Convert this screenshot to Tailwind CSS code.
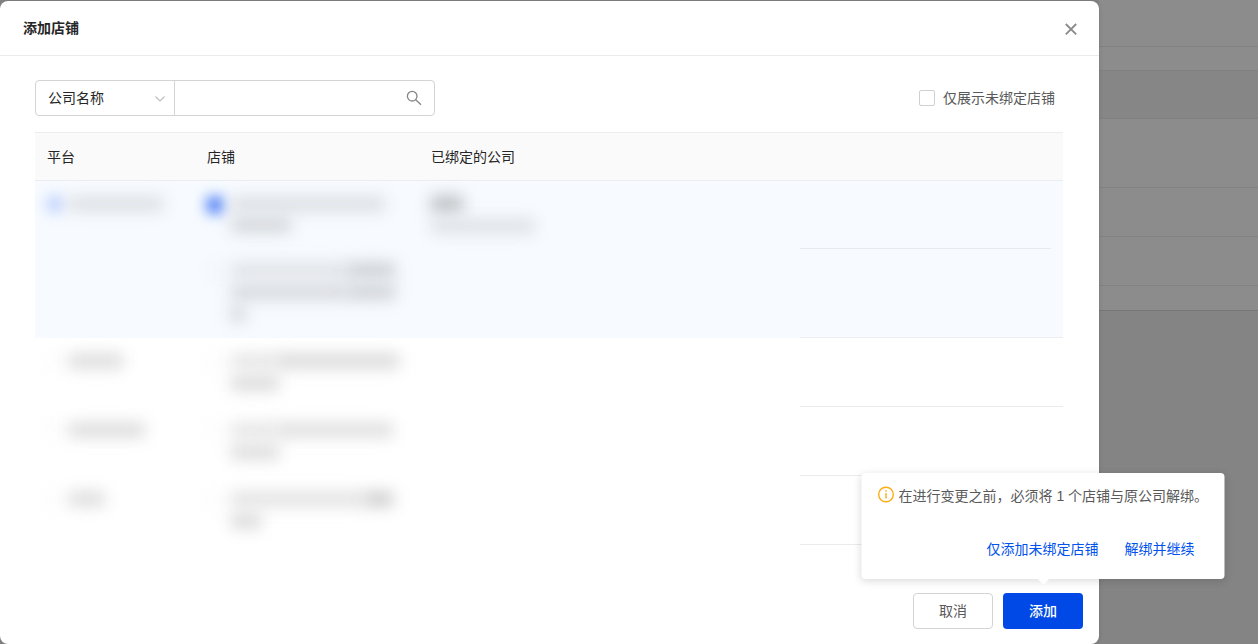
<!DOCTYPE html>
<html lang="zh-CN">
<head>
<meta charset="utf-8">
<meta name="viewport" content="width=device-width, initial-scale=1">
<title>添加店铺</title>
<script src="https://cdn.jsdelivr.net/npm/@tailwindcss/browser@4"></script>
</head>
<body class="flex min-h-screen overflow-x-hidden bg-[#848484] font-['Liberation_Sans','Noto_Sans_CJK_SC',sans-serif] text-sm text-[#262626]">

<main role="dialog" aria-labelledby="title" class="z-10 mt-px flex min-w-0 flex-1 flex-col rounded-lg bg-white shadow-[0_0_4px_rgba(0,0,0,0.15)]">
  <header class="flex h-[55px] items-center justify-between border-b border-[#ebebeb] pr-5 pl-[23px]">
    <h1 id="title" class="text-sm font-bold">添加店铺</h1>
    <button type="button" aria-label="关闭" class="flex size-4 items-center justify-center text-[#8a8a8a]">
      <svg class="size-4" viewBox="0 0 16 16" fill="none" stroke="currentColor" stroke-width="1.8"><path d="M2.8 4l10.400 10.400M13.200 4l-10.400 10.400"/></svg>
    </button>
  </header>

  <div class="flex flex-1 flex-col gap-4 pt-6 pr-9 pl-[35px]">
    <div class="flex items-center justify-between pr-2">
      <div class="flex h-9 w-[400px] rounded border border-[#d4d4d4]">
        <div class="relative w-[138px]">
          <select aria-label="搜索字段" class="h-full w-full appearance-none bg-transparent pl-3 outline-none">
            <option>公司名称</option>
          </select>
          <svg class="pointer-events-none absolute top-3 right-2 size-3" viewBox="0 0 12 12" fill="none" stroke="#bdbdbd" stroke-width="1.1"><path d="M1.5 3.500L6 8 10.500 3.500"/></svg>
        </div>
        <input type="text" aria-label="搜索关键词" class="min-w-0 flex-1 border-l border-[#d4d4d4] px-3 outline-none">
        <button type="button" aria-label="搜索" class="flex w-10 items-center justify-center text-[#858585]">
          <svg class="size-4" viewBox="0 0 16 16" fill="none" stroke="currentColor" stroke-width="1.3"><circle cx="6.200" cy="6.200" r="4.800"/><path d="M9.700 9.700L15 14.800"/></svg>
        </button>
      </div>
      <label class="flex items-center gap-2 text-[#595959]">
        <input type="checkbox" class="size-4 appearance-none rounded-xs border border-[#d0d0d0] bg-white">
        仅展示未绑定店铺
      </label>
    </div>

    <table class="w-full table-fixed border-separate border-spacing-0 text-left">
      <colgroup><col class="w-40"><col class="w-56"><col class="w-[381px]"><col></colgroup>
      <thead class="bg-[#fafafa]">
        <tr class="h-[49px]">
          <th class="border-y border-[#ebedf0] px-3 py-0 font-normal">平台</th>
          <th class="border-y border-[#ebedf0] px-3 py-0 font-normal">店铺</th>
          <th colspan="2" class="border-y border-[#ebedf0] px-3 py-0 font-normal">已绑定的公司</th>
        </tr>
      </thead>
      <tbody>
        <tr class="bg-[#f7fbff]">
          <td rowspan="2" class="px-3 pt-3 align-top">
            <div class="flex h-[22px] items-center gap-1.5">
              <input type="checkbox" aria-label="平台一" class="size-4 appearance-none rounded-xs bg-[#bdd0fc] blur-[7px]">
              <div class="h-3.5 w-[94px] bg-[#dadce0] blur-[8px]"></div>
            </div>
          </td>
          <td class="px-3 py-3 align-top">
            <div class="flex gap-2">
              <input type="checkbox" checked aria-label="店铺一" class="mt-1 size-4 appearance-none rounded-xs bg-[#3a70f5] blur-[7px]">
              <div>
                <div class="flex h-[22px] items-center"><div class="h-3.5 w-[154px] bg-[#dadce0] blur-[8px]"></div></div>
                <div class="flex h-5 items-center"><div class="h-3.5 w-[60px] bg-[#d0d2d6] blur-[8px]"></div></div>
              </div>
            </div>
          </td>
          <td class="px-3 py-3 align-top">
            <div class="flex h-[22px] items-center"><div class="h-4 w-8 bg-[#babcc0] blur-[8px]"></div></div>
            <div class="flex h-[22px] items-center"><div class="h-3.5 w-[104px] bg-[#dcdee2] blur-[8px]"></div></div>
          </td>
          <td class="p-0 align-bottom"><div class="mr-3 border-b border-[#e6ebf0]"></div></td>
        </tr>
        <tr class="bg-[#f7fbff]">
          <td class="px-3 pt-2.5 pb-[13px] align-top">
            <div class="flex gap-2">
              <input type="checkbox" aria-label="店铺二" class="mt-1 size-4 appearance-none rounded-xs border border-[#e4e8ee] blur-[7px]">
              <div>
                <div class="flex h-[22px] items-center"><div class="h-3.5 w-[116px] bg-[#dee0e4] blur-[8px]"></div><div class="h-3.5 w-12 bg-[#c9cbcf] blur-[8px]"></div></div>
                <div class="flex h-[22px] items-center"><div class="h-3.5 w-[116px] bg-[#d3d5d9] blur-[8px]"></div><div class="h-3.5 w-12 bg-[#cbcdd1] blur-[8px]"></div></div>
                <div class="flex h-[22px] items-center"><div class="h-3.5 w-3.5 bg-[#cdcfd3] blur-[8px]"></div></div>
              </div>
            </div>
          </td>
          <td></td>
          <td class="border-b border-[#ebedf0]"></td>
        </tr>
        <tr>
          <td class="px-3 pt-3 pb-[13px] align-top">
            <div class="flex h-[22px] items-center gap-1.5">
              <input type="checkbox" aria-label="平台二" class="size-4 appearance-none rounded-xs border border-[#eeeeee] blur-[7px]">
              <div class="h-3.5 w-[54px] bg-[#d9d9d9] blur-[8px]"></div>
            </div>
          </td>
          <td class="px-3 pt-3 pb-[13px] align-top">
            <div class="flex gap-2">
              <input type="checkbox" aria-label="店铺三" class="mt-1 size-4 appearance-none rounded-xs border border-[#eeeeee] blur-[7px]">
              <div>
                <div class="flex h-[22px] items-center"><div class="h-3.5 w-11 bg-[#e3e3e3] blur-[8px]"></div><div class="h-3.5 w-[124px] bg-[#d7d7d7] blur-[8px]"></div></div>
                <div class="flex h-[22px] items-center"><div class="h-3.5 w-12 bg-[#d7d7d7] blur-[8px]"></div></div>
              </div>
            </div>
          </td>
          <td></td>
          <td class="border-b border-[#ebebeb]"></td>
        </tr>
        <tr>
          <td class="px-3 pt-3 pb-[13px] align-top">
            <div class="flex h-[22px] items-center gap-1.5">
              <input type="checkbox" aria-label="平台三" class="size-4 appearance-none rounded-xs border border-[#eeeeee] blur-[7px]">
              <div class="h-3.5 w-[76px] bg-[#d9d9d9] blur-[8px]"></div>
            </div>
          </td>
          <td class="px-3 pt-3 pb-[13px] align-top">
            <div class="flex gap-2">
              <input type="checkbox" aria-label="店铺四" class="mt-1 size-4 appearance-none rounded-xs border border-[#eeeeee] blur-[7px]">
              <div>
                <div class="flex h-[22px] items-center"><div class="h-3.5 w-11 bg-[#e3e3e3] blur-[8px]"></div><div class="h-3.5 w-[118px] bg-[#dcdcdc] blur-[8px]"></div></div>
                <div class="flex h-[22px] items-center"><div class="h-3.5 w-12 bg-[#d9d9d9] blur-[8px]"></div></div>
              </div>
            </div>
          </td>
          <td></td>
          <td class="border-b border-[#ebebeb]"></td>
        </tr>
        <tr>
          <td class="px-3 pt-3 pb-[13px] align-top">
            <div class="flex h-[22px] items-center gap-1.5">
              <input type="checkbox" aria-label="平台四" class="size-4 appearance-none rounded-xs border border-[#eeeeee] blur-[7px]">
              <div class="h-3.5 w-9 bg-[#dadada] blur-[8px]"></div>
            </div>
          </td>
          <td class="px-3 pt-3 pb-[13px] align-top">
            <div class="flex gap-2">
              <input type="checkbox" aria-label="店铺五" class="mt-1 size-4 appearance-none rounded-xs border border-[#eeeeee] blur-[7px]">
              <div>
                <div class="flex h-[22px] items-center"><div class="h-3.5 w-[134px] bg-[#e0e0e0] blur-[8px]"></div><div class="h-3.5 w-7 bg-[#c8c8c8] blur-[8px]"></div></div>
                <div class="flex h-[22px] items-center"><div class="h-3.5 w-[30px] bg-[#d6d6d6] blur-[8px]"></div></div>
              </div>
            </div>
          </td>
          <td></td>
          <td class="border-b border-[#ebebeb]"></td>
        </tr>
      </tbody>
    </table>
  </div>

  <footer class="flex justify-end gap-2.5 pr-4 pb-[15px]">
    <button type="button" class="h-9 w-20 rounded border border-[#d4d4d4] bg-white text-[#595959]">取消</button>
    <div class="relative">
      <button type="button" class="h-9 w-20 rounded bg-[#0049e6] font-medium text-white">添加</button>
      <div role="alertdialog" aria-labelledby="tip" class="absolute bottom-full left-1/2 mb-3.5 w-[363px] -translate-x-1/2 rounded bg-white pt-3 pr-4 pb-[19px] pl-4 shadow-[0_2px_8px_rgba(0,0,0,0.15)]">
        <div class="flex gap-1 text-[#595959]">
          <svg class="mt-px size-[17px] shrink-0" viewBox="0 0 17 17" fill="none" stroke="#faad14" stroke-width="1.4"><circle cx="8.500" cy="8.500" r="7.300"/><path d="M8.500 4.200v1.500M8.500 7v5.500"/></svg>
          <p id="tip" class="leading-[22px] whitespace-nowrap">在进行变更之前，必须将 1 个店铺与原公司解绑。</p>
        </div>
        <div class="mt-[31px] flex justify-end gap-[26px] pr-3.5 leading-[22px] text-[#0052ee]">
          <button type="button">仅添加未绑定店铺</button>
          <button type="button">解绑并继续</button>
        </div>
        <div class="absolute top-full left-1/2 -mt-1 size-2 -translate-x-1/2 rotate-45 bg-white"></div>
      </div>
    </div>
  </footer>
</main>

<aside aria-hidden="true" class="w-[159px] shrink-0">
  <div class="h-[47px] border-b border-[#828282] bg-[#8c8c8c]"></div>
  <div class="h-[23px] bg-[#8c8c8c]"></div>
  <div class="h-[49px] border-y border-[#808080] bg-[#868686]"></div>
  <div class="h-[69px] border-b border-[#828282] bg-[#8c8c8c]"></div>
  <div class="h-[49px] border-b border-[#828282] bg-[#8c8c8c]"></div>
  <div class="h-[49px] border-b border-[#828282] bg-[#8c8c8c]"></div>
  <div class="h-[25px] border-b border-[#777777] bg-[#8c8c8c]"></div>
</aside>
</body>
</html>
